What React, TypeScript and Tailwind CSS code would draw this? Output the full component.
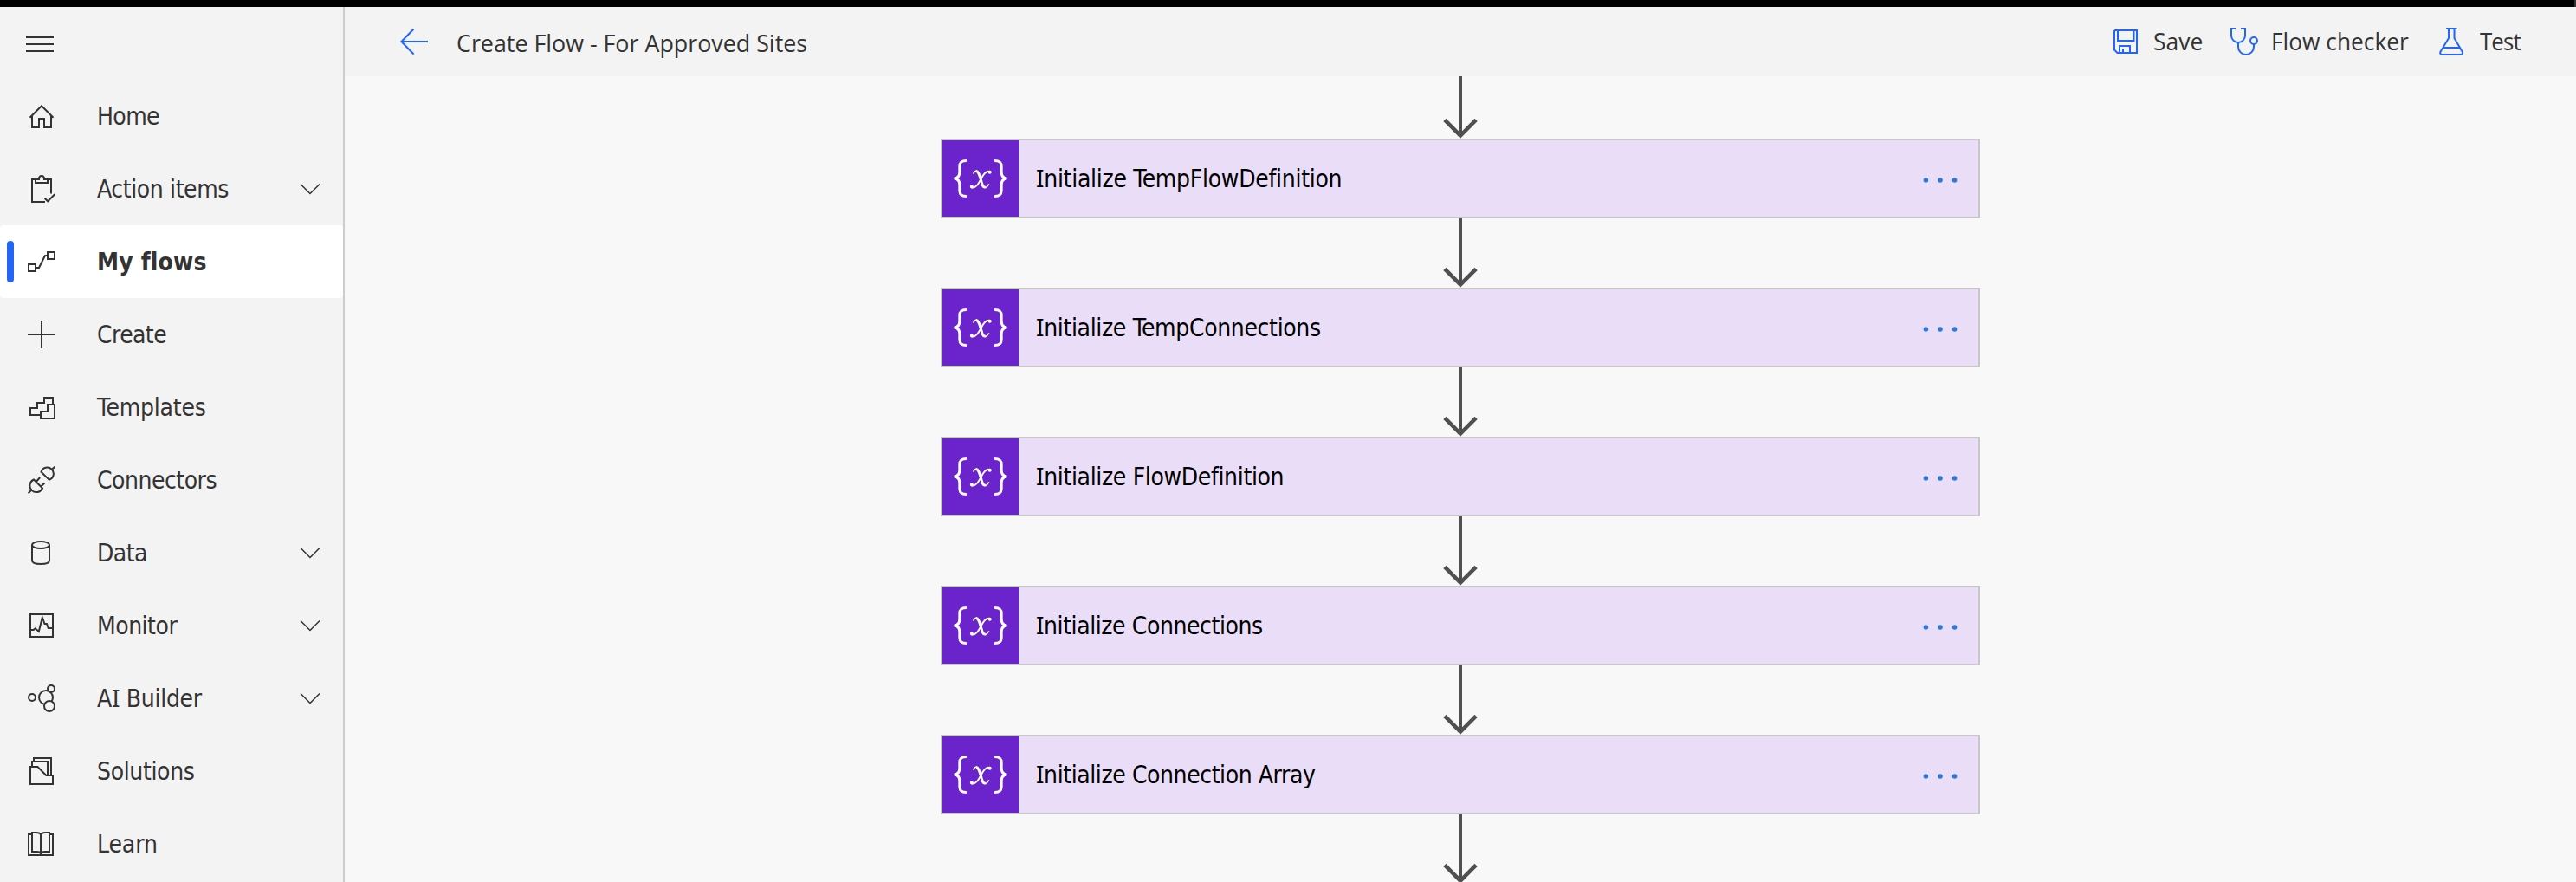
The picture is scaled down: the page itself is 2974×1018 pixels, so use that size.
import React from 'react';

type NavItem = {
  label: string;
  icon: React.ReactNode;
  tracking: string;
  expandable?: boolean;
  active?: boolean;
};

function Label({ text }: { text: string }) {
  return (
    <>
      {text.split(/(I)/).map((part, i) =>
        part === 'I' ? (
          <span key={i} className="font-['Noto_Sans'] leading-[0]">
            I
          </span>
        ) : (
          part
        ),
      )}
    </>
  );
}

const navItems: NavItem[] = [
  {
    label: 'Home',
    tracking: 'tracking-[-0.6px]',
    icon: (
      <>
        <path d="M2.5 17.7 16 4.2l13.5 13.5" />
        <path d="M5 15.5V29H13V19H19V29H27V15.5" />
      </>
    ),
  },
  {
    label: 'Action items',
    tracking: 'tracking-[-0.4px]',
    expandable: true,
    icon: (
      <>
        <path d="M20 31H5V5H13C13 2.5 14.2 1 16 1S19 2.5 19 5H27V21.5" />
        <path d="M9 5V9H23V5" />
        <path d="M19.5 26.7l3.7 3.6 8-8" />
      </>
    ),
  },
  {
    label: 'My flows',
    tracking: 'tracking-[0.15px]',
    active: true,
    icon: (
      <>
        <path d="M1 19H9V27H1ZM23 5H31V13H23Z" />
        <path d="M10 23H13L20 9H22" />
      </>
    ),
  },
  { label: 'Create', tracking: 'tracking-[-0.6px]', icon: <path d="M0 16H32M16 0V32" /> },
  {
    label: 'Templates',
    tracking: 'tracking-[-0.22px]',
    icon: (
      <>
        <path d="M15 25H3V17H11V11H19V5H29V13" />
        <path d="M15 29V21H23V13H31V29Z" />
      </>
    ),
  },
  {
    label: 'Connectors',
    tracking: 'tracking-[-0.5px]',
    icon: (
      <>
        <path d="M15.5 6.7A7.3 7.3 0 1 1 24.7 15.7ZM28 3.8L31.3 0.7" />
        <path d="M7 15.5A7.6 7.6 0 1 0 17 25.5ZM4 28L0.6 31.4" />
        <path d="M9.7 18L14.2 13M15 23.8L19.5 19.5" />
      </>
    ),
  },
  {
    label: 'Data',
    tracking: 'tracking-[-0.6px]',
    expandable: true,
    icon: (
      <>
        <ellipse cx="15" cy="7" rx="10" ry="4" />
        <path d="M5 7V25C5 27.5 9 29 15 29S25 27.5 25 25V7" />
      </>
    ),
  },
  {
    label: 'Monitor',
    tracking: 'tracking-[-0.5px]',
    expandable: true,
    icon: (
      <>
        <path d="M3 3H29V29H3Z" />
        <path d="M4 21H6.7L8.7 19.3 12.8 23 16.8 6.7 19.5 14H22L23.7 19H28" />
      </>
    ),
  },
  {
    label: 'AI Builder',
    tracking: 'tracking-[-0.3px]',
    expandable: true,
    icon: (
      <>
        <circle cx="5" cy="15" r="4" />
        <circle cx="21" cy="15" r="8" />
        <circle cx="27" cy="5" r="4" fill="#f3f3f3" />
        <circle cx="25" cy="25" r="6" fill="#f3f3f3" />
      </>
    ),
  },
  {
    label: 'Solutions',
    tracking: 'tracking-[-0.36px]',
    icon: (
      <>
        <path d="M3 11H11.5L21.3 21H29V31H3Z" />
        <path d="M5 11V5H23V21" />
        <path d="M7 5V1H27V21" />
      </>
    ),
  },
  {
    label: 'Learn',
    tracking: 'tracking-[-0.1px]',
    icon: (
      <>
        <path d="M5 5H1V29H29V5H25" />
        <path d="M15 29V5C14 3.7 12 3 10 3H5V25H11C13 25 14.3 25.8 15 27C15.7 25.8 17 25 19 25H25V3H20C18 3 16 3.7 15 5" />
      </>
    ),
  },
];

const steps = [
  { label: 'Initialize TempFlowDefinition', tracking: 'tracking-[-0.29px]' },
  { label: 'Initialize TempConnections', tracking: 'tracking-[-0.35px]' },
  { label: 'Initialize FlowDefinition', tracking: 'tracking-[-0.35px]' },
  { label: 'Initialize Connections', tracking: 'tracking-[-0.43px]' },
  { label: 'Initialize Connection Array', tracking: 'tracking-[-0.42px]' },
];

function NavRow({ item }: { item: NavItem }) {
  return (
    <a
      className={`relative flex h-[84px] shrink-0 items-center pr-[26px] pl-8 ${item.active ? 'rounded bg-white font-bold' : ''}`}
    >
      {item.active && <span className="absolute left-2 h-12 w-2 rounded-full bg-[#2266f7]" />}
      <svg viewBox="0 0 32 32" className="size-8 shrink-0 fill-none stroke-[#333] stroke-2">
        {item.icon}
      </svg>
      <span className={`mt-[2px] ml-12 flex-1 whitespace-nowrap ${item.tracking}`}>
        <Label text={item.label} />
      </span>
      {item.expandable && (
        <svg viewBox="0 0 24 14" className="h-[14px] w-6 fill-none stroke-[#333] stroke-[1.5]">
          <path d="M1 1.5 12 12.5 23 1.5" />
        </svg>
      )}
    </a>
  );
}

function Arrow() {
  return (
    <svg viewBox="0 0 44 80" className="h-20 w-11 shrink-0 fill-none stroke-[#505050]">
      <path strokeWidth="4" d="M22 0V76" />
      <path strokeWidth="4.6" d="M3.9 58.4 22 76.6 40.1 58.4" />
    </svg>
  );
}

function StepCard({ label, tracking }: { label: string; tracking: string }) {
  return (
    <div className="flex h-[92px] w-[1200px] shrink-0 items-center border-2 border-[#c8c6c8] bg-[#eaddf7]">
      <div className="flex size-[88px] bg-[#6b23cc]">
        <svg viewBox="0 0 88 88" className="size-full fill-none stroke-white">
          <path
            strokeWidth="3.1"
            d="M27.9 23.5C22.5 23.5 19.9 25 19.9 30V36.5C19.9 41.5 18 43.6 13.6 44C18 44.4 19.9 46.5 19.9 51.5V58C19.9 63 22.5 64.5 27.9 64.5"
          />
          <path
            strokeWidth="3.1"
            d="M60.1 23.5C65.5 23.5 68.1 25 68.1 30V36.5C68.1 41.5 70 43.6 74.4 44C70 44.4 68.1 46.5 68.1 51.5V58C68.1 63 65.5 64.5 60.1 64.5"
          />
          <path strokeWidth="3" d="M39 35.8C43.2 35.6 44.6 49 46.6 52.4C47.4 54 48.6 54.4 50 53.8" />
          <path strokeWidth="1.5" d="M35.6 38.6C36.6 36.2 38 35 40 35M49.6 54.6C51.4 54.2 52.8 52.2 53.8 50.4" />
          <path strokeWidth="1.8" d="M55 35.9C50 34.8 46.8 40 44.6 44.5C41.8 49.8 38.6 55.6 33.6 54.4" />
          <circle cx="54.7" cy="36.7" r="2" className="fill-white stroke-none" />
          <circle cx="33.9" cy="53.4" r="2" className="fill-white stroke-none" />
        </svg>
      </div>
      <span className={`mt-[2px] ml-5 flex-1 whitespace-nowrap text-black ${tracking}`}>
        <Label text={label} />
      </span>
      <svg viewBox="0 0 40 6" className="mt-1 mr-6 h-1.5 w-10 fill-[#2b7ad5]">
        <circle cx="3.4" cy="3" r="2.8" />
        <circle cx="20" cy="3" r="2.8" />
        <circle cx="36.6" cy="3" r="2.8" />
      </svg>
    </div>
  );
}

const headerIcon = 'shrink-0 fill-none stroke-[#2266f7] stroke-2';

export default function App() {
  return (
    <div className="flex h-[1018px] w-[2974px] flex-col overflow-hidden bg-[#f8f8f8] font-['DejaVu_Sans_Condensed','DejaVu_Sans',sans-serif] text-[28px] text-[#333]">
      <div className="h-2 shrink-0 border-r-2 border-[#333] bg-black" />
      <div className="flex min-h-0 flex-1">
        <nav className="flex w-[398px] shrink-0 flex-col border-r-2 border-[#ccc] bg-[#f3f3f3]">
          <div className="flex h-[84px] shrink-0 items-start pt-[34px] pl-[30px]">
            <svg viewBox="0 0 32 18" className="h-[18px] w-8 stroke-[#333] stroke-2">
              <path d="M0 1H32M0 9H32M0 17H32" />
            </svg>
          </div>
          {navItems.map((item) => (
            <NavRow key={item.label} item={item} />
          ))}
        </nav>
        <main className="flex min-w-0 flex-1 flex-col">
          <header className="flex h-20 shrink-0 items-center bg-[#f3f3f3] pl-16 font-['Open_Sans',sans-serif]">
            <svg viewBox="0 0 32 32" className={`size-8 ${headerIcon}`}>
              <path d="M32 16H1.6M15.6 1.5 1.4 16 15.6 30.5" />
            </svg>
            <h1 className="mt-[2px] ml-[33px] flex-1 origin-left scale-x-[0.958] whitespace-nowrap">
              Create Flow - For Approved Sites
            </h1>
            <button className="flex w-[135px] items-center">
              <svg viewBox="0 0 28 28" className={`size-7 ${headerIcon}`}>
                <path d="M2 1H27V27H4.5L1 23.5V2Z" />
                <path d="M5 1V13H23.5V1M7 27V19H19V27M11 22V27" />
              </svg>
              <span className="-mt-[3px] ml-[18px] origin-left scale-x-[0.945]">Save</span>
            </button>
            <button className="flex w-[241px] items-center">
              <svg viewBox="0 0 32 32" className={`size-8 ${headerIcon}`}>
                <path d="M6 1H1V9A8 8 0 0 0 17 9V1H12" />
                <path d="M9 17V22A9 9 0 0 0 27 22V19" />
                <circle cx="27" cy="15" r="4" />
              </svg>
              <span className="-mt-[3px] ml-[15px] origin-left scale-x-[0.94] whitespace-nowrap">Flow checker</span>
            </button>
            <button className="flex w-[158px] items-center">
              <svg viewBox="0 0 28 32" className={`h-8 w-7 ${headerIcon}`}>
                <path d="M8 1H20.5M11 1V12L1.6 27.5C0.6 29.3 1.6 31 3.6 31H24.8C26.8 31 27.6 29.3 26.6 27.5L17.5 12V1M4.5 23H24" />
              </svg>
              <span className="-mt-[3px] ml-[19px] origin-left scale-x-[0.92] tracking-[-0.9px]">Test</span>
            </button>
          </header>
          <section className="flex min-h-0 flex-1 flex-col items-center overflow-hidden">
            <div className="flex h-[72px] shrink-0 items-end overflow-hidden">
              <Arrow />
            </div>
            {steps.map((step) => (
              <React.Fragment key={step.label}>
                <StepCard label={step.label} tracking={step.tracking} />
                <Arrow />
              </React.Fragment>
            ))}
          </section>
        </main>
      </div>
    </div>
  );
}
